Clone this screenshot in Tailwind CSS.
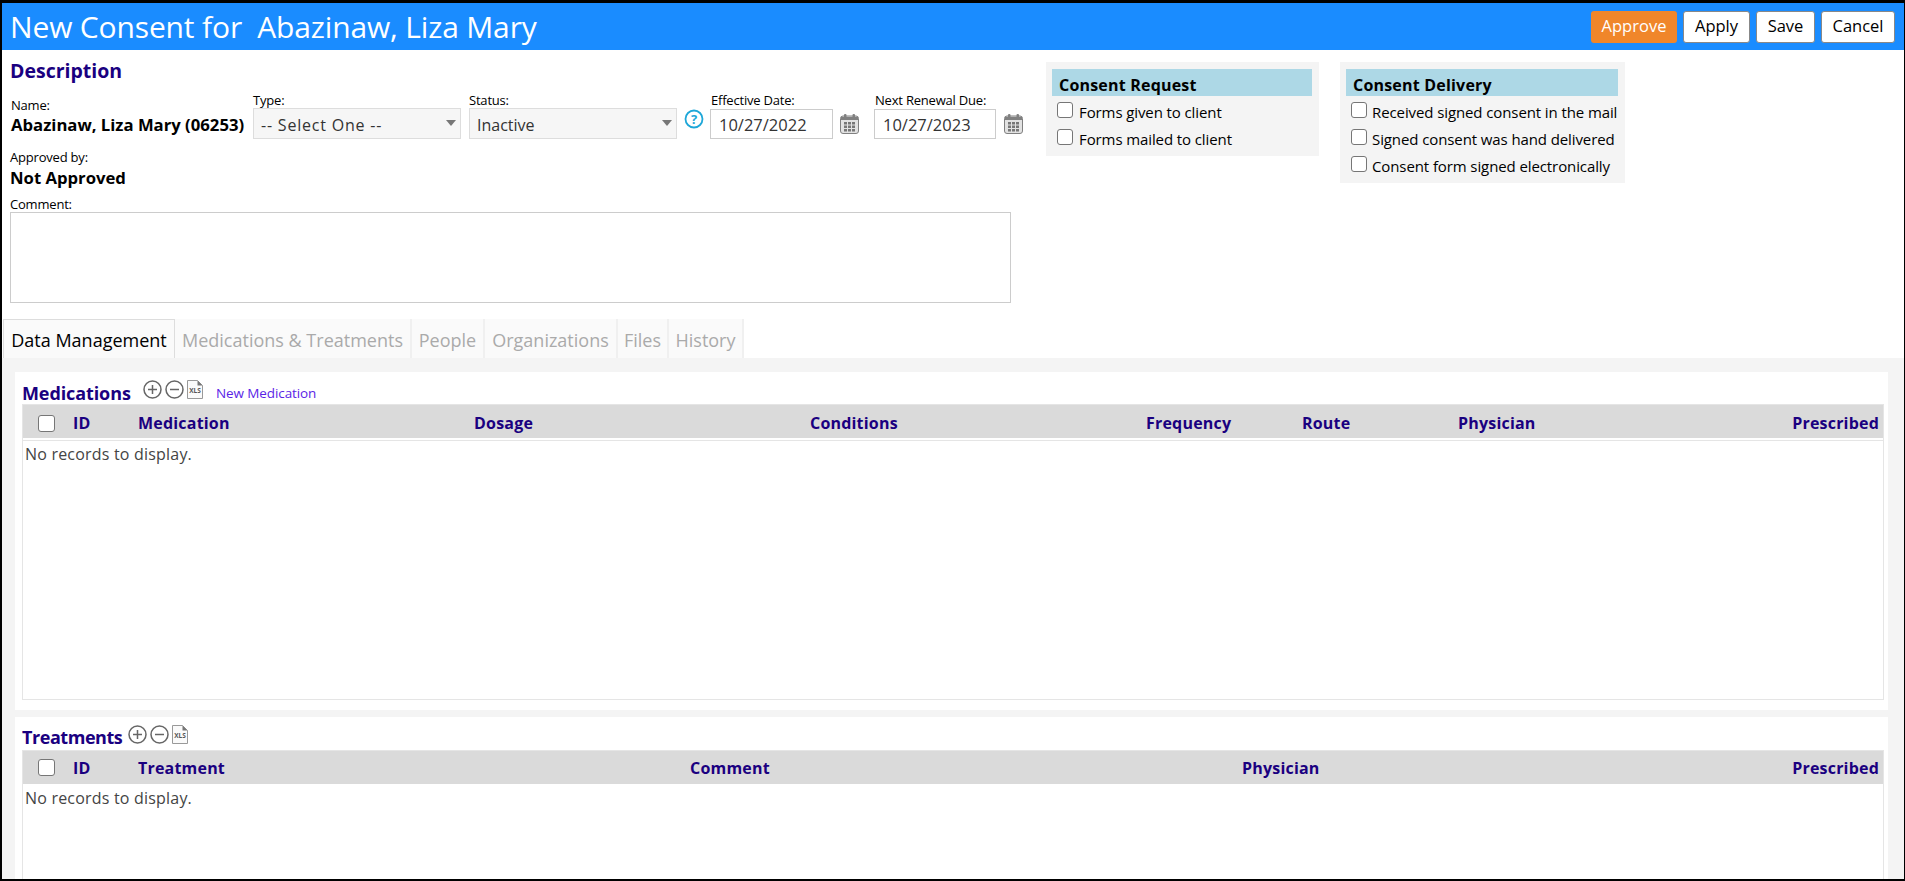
<!DOCTYPE html>
<html lang="en">
<head>
    <meta charset="UTF-8">
    <meta name="viewport" content="width=device-width, initial-scale=1.0">
    <title>New Consent</title>
    <script src="https://cdn.jsdelivr.net/npm/@tailwindcss/browser@4"></script>
</head>
<body class="bg-black font-['Open_Sans',sans-serif] text-black overflow-hidden">
    <div class="w-[1905px] h-[881px] pt-[3px] pl-[2px] pr-[1px] pb-[2px]">
        <div class="h-[876px] bg-white overflow-hidden">

            <!-- title bar -->
            <div class="h-[47px] bg-[#1a8cff] flex items-center justify-between pl-[8px] pr-[9px]">
                <h1 class="text-[30px] leading-[40px] text-white tracking-[-0.15px] whitespace-pre">New Consent for  Abazinaw, Liza Mary</h1>
                <div class="flex gap-[6px] text-[16.5px]">
                    <button class="w-[86px] h-[32px] bg-[#f0862a] text-white rounded-[3px]">Approve</button>
                    <button class="w-[67px] h-[32px] bg-white border border-[#888] rounded-[3px]">Apply</button>
                    <button class="w-[59px] h-[32px] bg-white border border-[#888] rounded-[3px]">Save</button>
                    <button class="w-[74px] h-[32px] bg-white border border-[#888] rounded-[3px]">Cancel</button>
                </div>
            </div>

            <!-- description -->
            <div class="flex h-[269px]">
                <div class="w-[1044px] pl-[8px] shrink-0">
                    <h2 class="text-[19.5px] leading-[24px] font-bold text-[#1a0080] mt-[9px]">Description</h2>
                    <div class="flex mt-[9px] h-[47px]">
                        <div class="w-[243px] pt-[5px]">
                            <div class="text-[13px] leading-[16px] tracking-[-0.2px] pl-[1px]">Name:</div>
                            <div class="text-[16.7px] leading-[20px] font-bold mt-[2px] pl-[1px] whitespace-nowrap">Abazinaw, Liza Mary (06253)</div>
                        </div>
                        <div class="w-[216px]">
                            <div class="text-[13px] leading-[16px] tracking-[-0.2px]">Type:</div>
                            <div class="relative w-[208px]">
                                <select class="appearance-none w-full h-[31px] bg-[#f6f6f6] border border-[#ddd] pl-[7px] pt-[2px] text-[16px] tracking-[0.8px] text-[#333]"><option>-- Select One --</option></select>
                                <svg class="absolute right-[5px] top-[12px]" width="10" height="6" viewBox="0 0 10 6"><path d="M0 0h10L5 6z" fill="#777"/></svg>
                            </div>
                        </div>
                        <div class="w-[215px]">
                            <div class="text-[13px] leading-[16px] tracking-[-0.2px]">Status:</div>
                            <div class="relative w-[208px]">
                                <select class="appearance-none w-full h-[31px] bg-[#f6f6f6] border border-[#ddd] pl-[7px] pt-[2px] text-[16px] text-[#333]"><option>Inactive</option></select>
                                <svg class="absolute right-[5px] top-[12px]" width="10" height="6" viewBox="0 0 10 6"><path d="M0 0h10L5 6z" fill="#777"/></svg>
                            </div>
                        </div>
                        <svg class="mt-[17px] shrink-0" width="20" height="20" viewBox="0 0 20 20"><circle cx="10" cy="10" r="8.5" fill="none" stroke="#1ea7d8" stroke-width="1.8"/><text x="10" y="15" text-anchor="middle" font-size="13" font-weight="700" fill="#1ea7d8" font-family="Open Sans">?</text></svg>
                        <div class="ml-[6px] w-[164px] shrink-0">
                            <div class="text-[13px] leading-[16px] tracking-[-0.2px] pl-[1px]">Effective Date:</div>
                            <div class="flex items-center gap-[7px] mt-[1px]">
                                <input value="10/27/2022" class="w-[123px] h-[30px] border border-[#ccc] pl-[8px] text-[16.5px] text-[#333]">
                                <svg width="19" height="20" viewBox="0 0 19 20"><rect x="0.5" y="2" width="18" height="17.5" rx="2.5" fill="#e2e2e2" stroke="#808080"/><path d="M1 3h17v3H1z" fill="#808080"/><rect x="4" y="0" width="2.5" height="4" rx="1" fill="#808080"/><rect x="12.5" y="0" width="2.5" height="4" rx="1" fill="#808080"/><path d="M4 8h3v2.5H4zM8 8h3v2.5H8zM12 8h3v2.5h-3zM4 11.5h3V14H4zM8 11.5h3V14H8zM12 11.5h3V14h-3zM4 15h3v2.5H4zM8 15h3v2.5H8zM12 15h3v2.5h-3z" fill="#777"/></svg>
                            </div>
                        </div>
                        <div class="w-[150px] shrink-0">
                            <div class="text-[13px] leading-[16px] tracking-[-0.2px] pl-[1px]">Next Renewal Due:</div>
                            <div class="flex items-center gap-[8px] mt-[1px]">
                                <input value="10/27/2023" class="w-[122px] h-[30px] border border-[#ccc] pl-[8px] text-[16.5px] text-[#333]">
                                <svg width="19" height="20" viewBox="0 0 19 20"><rect x="0.5" y="2" width="18" height="17.5" rx="2.5" fill="#e2e2e2" stroke="#808080"/><path d="M1 3h17v3H1z" fill="#808080"/><rect x="4" y="0" width="2.5" height="4" rx="1" fill="#808080"/><rect x="12.5" y="0" width="2.5" height="4" rx="1" fill="#808080"/><path d="M4 8h3v2.5H4zM8 8h3v2.5H8zM12 8h3v2.5h-3zM4 11.5h3V14H4zM8 11.5h3V14H8zM12 11.5h3V14h-3zM4 15h3v2.5H4zM8 15h3v2.5H8zM12 15h3v2.5h-3z" fill="#777"/></svg>
                            </div>
                        </div>
                    </div>
                    <div class="text-[13px] leading-[16px] tracking-[-0.2px] mt-[10px]">Approved by:</div>
                    <div class="text-[16.7px] leading-[20px] font-bold mt-[3px]">Not Approved</div>
                    <div class="text-[13px] leading-[16px] tracking-[-0.2px] mt-[8px]">Comment:</div>
                    <textarea class="block w-[1001px] h-[91px] border border-[#ccc] resize-none"></textarea>
                </div>

                <!-- consent boxes -->
                <div class="flex gap-[21px] items-start mt-[12px] text-[15px] tracking-[-0.1px]">
                    <div class="w-[273px] h-[94px] bg-[#f4f4f4] pl-[6px] pr-[7px] pt-[7px]">
                        <div class="h-[27px] bg-[#add8e6] pl-[7px] text-[16px] tracking-[0.2px] leading-[32px] font-bold">Consent Request</div>
                        <label class="flex items-center gap-[6px] h-[27px] pl-[5px]"><input type="checkbox" class="appearance-none w-[16px] h-[16px] bg-white border border-[#767676] rounded-[3px]"><span class="mt-[6px]">Forms given to client</span></label>
                        <label class="flex items-center gap-[6px] h-[27px] pl-[5px]"><input type="checkbox" class="appearance-none w-[16px] h-[16px] bg-white border border-[#767676] rounded-[3px]"><span class="mt-[6px]">Forms mailed to client</span></label>
                    </div>
                    <div class="w-[285px] h-[121px] bg-[#f4f4f4] pl-[6px] pr-[7px] pt-[7px]">
                        <div class="h-[27px] bg-[#add8e6] pl-[7px] text-[16px] tracking-[0.2px] leading-[32px] font-bold">Consent Delivery</div>
                        <label class="flex items-center gap-[5px] h-[27px] pl-[5px] whitespace-nowrap"><input type="checkbox" class="appearance-none w-[16px] h-[16px] bg-white border border-[#767676] rounded-[3px]"><span class="mt-[6px]">Received signed consent in the mail</span></label>
                        <label class="flex items-center gap-[5px] h-[27px] pl-[5px] whitespace-nowrap"><input type="checkbox" class="appearance-none w-[16px] h-[16px] bg-white border border-[#767676] rounded-[3px]"><span class="mt-[6px]">Signed consent was hand delivered</span></label>
                        <label class="flex items-center gap-[5px] h-[27px] pl-[5px] whitespace-nowrap"><input type="checkbox" class="appearance-none w-[16px] h-[16px] bg-white border border-[#767676] rounded-[3px]"><span class="mt-[6px]">Consent form signed electronically</span></label>
                    </div>
                </div>
            </div>

            <!-- tabs -->
            <div class="flex h-[39px] ml-[1px] text-[18px] text-[#aaa] items-stretch">
                <div class="w-[172px] flex items-center justify-center pt-[3px] text-black bg-[#fafafa] border border-b-0 border-[#ddd]">Data Management</div>
                <div class="w-[237px] flex items-center justify-center pt-[3px] bg-[#fafafa] border-r-2 border-[#f0f0f0]">Medications &amp; Treatments</div>
                <div class="w-[73px] flex items-center justify-center pt-[3px] bg-[#fafafa] border-r-2 border-[#f0f0f0]">People</div>
                <div class="w-[133px] flex items-center justify-center pt-[3px] bg-[#fafafa] border-r-2 border-[#f0f0f0]">Organizations</div>
                <div class="w-[51px] flex items-center justify-center pt-[3px] bg-[#fafafa] border-r-2 border-[#f0f0f0]">Files</div>
                <div class="w-[75px] flex items-center justify-center pt-[3px] bg-[#fafafa] border-r-2 border-[#f0f0f0]">History</div>
            </div>

            <!-- data management -->
            <div class="bg-[#f4f4f4] h-[521px] pl-[13px] pr-[16px] pt-[14px]">
                <div class="bg-white h-[338px] pl-[7px] pr-[4px] pt-[8px]">
                    <div class="flex h-[24px] items-center">
                        <h3 class="text-[18px] font-bold text-[#1a0080] tracking-[-0.1px] w-[121px] mt-[2px]">Medications</h3>
                        <div class="flex gap-[3px] items-center mb-[6px]">
                            <svg width="19" height="19" viewBox="0 0 19 19"><circle cx="9.5" cy="9.5" r="8.5" fill="none" stroke="#666" stroke-width="1.5"/><path d="M5 9.5h9M9.5 5v9" stroke="#666" stroke-width="1.5"/></svg>
                            <svg width="19" height="19" viewBox="0 0 19 19"><circle cx="9.5" cy="9.5" r="8.5" fill="none" stroke="#666" stroke-width="1.5"/><path d="M5 9.5h9" stroke="#666" stroke-width="1.5"/></svg>
                            <svg width="16" height="19" viewBox="0 0 16 19"><path d="M.5.5h10l5 5v13H.5z" fill="#fafafa" stroke="#999"/><path d="M10.5.5v5h5z" fill="#777"/><text x="8" y="13" text-anchor="middle" font-size="6.5" font-weight="700" fill="#555" font-family="Open Sans">XLS</text></svg>
                        </div>
                        <a class="ml-[13px] text-[13.5px] text-[#5a1ee6] tracking-[-0.1px] mt-[3px]">New Medication</a>
                    </div>
                    <div class="border border-[#e5e5e5] h-[296px]">
                        <div class="grid grid-cols-[50px_65px_336px_336px_336px_156px_156px_200px_1fr] items-center h-[33px] pt-[3px] bg-[#dadada] text-[16px] font-bold text-[#1a0080] tracking-[0.2px] mb-[2px]">
                            <div class="pl-[15px] flex items-center"><input type="checkbox" class="appearance-none w-[17px] h-[17px] bg-white border border-[#767676] rounded-[3px]"></div>
                            <div>ID</div><div>Medication</div><div>Dosage</div><div>Conditions</div><div>Frequency</div><div>Route</div><div>Physician</div>
                            <div class="text-right pr-[4px]">Prescribed</div>
                        </div>
                        <div class="border-t border-[#e5e5e5] pl-[2px] pt-[2px] text-[16px] leading-[22px] text-[#444] tracking-[0.2px]">No records to display.</div>
                    </div>
                </div>
                <div class="bg-white h-[300px] mt-[7px] pl-[7px] pr-[4px] pt-[8px]">
                    <div class="flex h-[25px] items-center">
                        <h3 class="text-[18px] font-bold text-[#1a0080] tracking-[-0.45px] w-[106px]">Treatments</h3>
                        <div class="flex gap-[3px] items-center mb-[6px]">
                            <svg width="19" height="19" viewBox="0 0 19 19"><circle cx="9.5" cy="9.5" r="8.5" fill="none" stroke="#666" stroke-width="1.5"/><path d="M5 9.5h9M9.5 5v9" stroke="#666" stroke-width="1.5"/></svg>
                            <svg width="19" height="19" viewBox="0 0 19 19"><circle cx="9.5" cy="9.5" r="8.5" fill="none" stroke="#666" stroke-width="1.5"/><path d="M5 9.5h9" stroke="#666" stroke-width="1.5"/></svg>
                            <svg width="16" height="19" viewBox="0 0 16 19"><path d="M.5.5h10l5 5v13H.5z" fill="#fafafa" stroke="#999"/><path d="M10.5.5v5h5z" fill="#777"/><text x="8" y="13" text-anchor="middle" font-size="6.5" font-weight="700" fill="#555" font-family="Open Sans">XLS</text></svg>
                        </div>
                    </div>
                    <div class="border border-[#e5e5e5] h-[296px]">
                        <div class="grid grid-cols-[50px_65px_552px_552px_200px_1fr] items-center h-[33px] bg-[#dadada] text-[16px] font-bold text-[#1a0080] tracking-[0.2px]">
                            <div class="pl-[15px] flex items-center"><input type="checkbox" class="appearance-none w-[17px] h-[17px] bg-white border border-[#767676] rounded-[3px]"></div>
                            <div>ID</div><div>Treatment</div><div>Comment</div><div>Physician</div>
                            <div class="text-right pr-[4px]">Prescribed</div>
                        </div>
                        <div class="pl-[2px] pt-[3px] text-[16px] leading-[22px] text-[#444] tracking-[0.2px]">No records to display.</div>
                    </div>
                </div>
            </div>
        </div>
    </div>
</body>
</html>
